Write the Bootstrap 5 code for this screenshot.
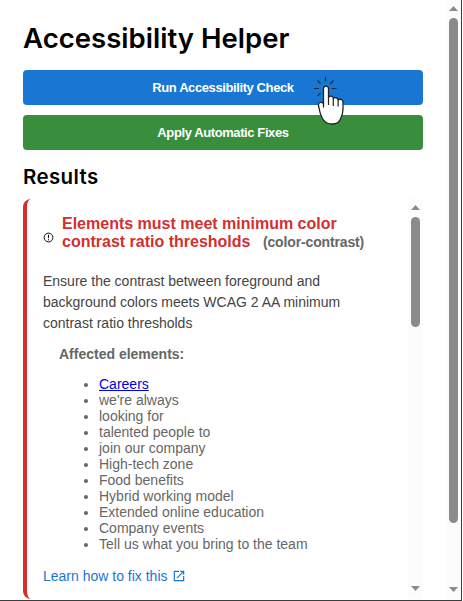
<!DOCTYPE html>
<html lang="en">
<head>
<meta charset="utf-8">
<meta name="viewport" content="width=device-width, initial-scale=1">
<title>Accessibility Helper</title>
<link href="https://cdn.jsdelivr.net/npm/bootstrap@5.3.0/dist/css/bootstrap.min.css" rel="stylesheet">
<style>
body{font-family:"Liberation Sans",Arial,sans-serif;font-size:14px;color:#000;background:#fff}
.window-frame{width:462px;height:601px;border-right:1px solid #3c3c3c;border-bottom:1px solid #3c3c3c}
.panel-main{width:423px;padding:20px 0 0 23px}
.panel-title{font-family:Inter,sans-serif;font-size:27.5px;line-height:36px;font-weight:600;letter-spacing:.04px;margin-bottom:14px;white-space:nowrap}
.btn-action{height:35px;border:0;border-radius:4px;font-size:13px;font-weight:700;line-height:15px;letter-spacing:-.4px;color:#fff;padding:0}
.btn-run{background:#1976d2;margin-bottom:10px}
.btn-fix{background:#388e3c}
.results-title{font-family:Inter,sans-serif;font-size:20.5px;line-height:24px;font-weight:600;letter-spacing:.35px;margin:15px 0 10px}
.issue-card{border-left:4px solid #d32f2f;border-radius:8px 0 0 8px;padding:16px 0 0 16px;width:385px;height:400px}
.issue-title{font-size:16px;line-height:18px;font-weight:700;color:#d32f2f;margin-left:8px}
.rule-name{font-size:14px;line-height:1;letter-spacing:-.14px;color:#666;margin-left:8px}
.issue-text{line-height:21px;color:#444;margin:20px 0 12px;width:320px}
.affected{color:#666;line-height:16px;padding-left:16px}
.affected ul{padding-left:40px;margin:14px 0 14px}
.affected a{color:#0000ee}
.learn-link{color:#1976d2;line-height:16px}
.track-bar{width:15px;background:#fcfcfc}
.thumb-bar{width:9px;border-radius:5px;background:#8b8b8b}
.pointer-hand{position:absolute;left:310px;top:74px}
</style>
</head>
<body class="overflow-hidden">
<div class="window-frame d-flex justify-content-between position-relative">
  <main class="panel-main">
    <h1 class="panel-title">Accessibility Helper</h1>
    <button class="btn btn-action btn-run w-100 d-block">Run Accessibility Check</button>
    <button class="btn btn-action btn-fix w-100 d-block">Apply Automatic Fixes</button>
    <h2 class="results-title">Results</h2>
    <div class="d-flex">
      <section class="issue-card">
        <div class="d-flex align-items-center">
          <svg class="flex-shrink-0 mt-2" width="11" height="11" viewBox="0 0 11 11" fill="none" stroke="#111"><circle cx="5.5" cy="5.5" r="4.4"/><path d="M5.500 2.700v3.500M5.500 7.200v1.100"/></svg>
          <h3 class="issue-title mb-0">Elements must meet minimum color<br>contrast ratio thresholds <span class="rule-name">(color-contrast)</span></h3>
        </div>
        <p class="issue-text">Ensure the contrast between foreground and background colors meets WCAG 2 AA minimum contrast ratio thresholds</p>
        <div class="affected">
          <strong>Affected elements:</strong>
          <ul>
            <li><a href="#">Careers</a></li>
            <li>we're always</li>
            <li>looking for</li>
            <li>talented people to</li>
            <li>join our company</li>
            <li>High-tech zone</li>
            <li>Food benefits</li>
            <li>Hybrid working model</li>
            <li>Extended online education</li>
            <li>Company events</li>
            <li>Tell us what you bring to the team</li>
          </ul>
        </div>
        <a class="learn-link d-inline-flex align-items-center text-decoration-none" href="#">Learn how to fix this
          <svg class="ms-1" width="14" height="14" viewBox="0 0 24 24" fill="#1976d2"><path d="M19 19H5V5h7V3H3v18h18v-9h-2zM14 3v2h3.600L7.800 14.800l1.400 1.400L19 6.400V10h2V3z"/></svg>
        </a>
      </section>
      <div class="track-bar d-flex flex-column align-items-center">
        <svg class="mt-1" width="9" height="14" viewBox="0 0 9 14"><path d="M0 7l4.500-5 4.500 5z" fill="#8b8b8b"/></svg>
        <div class="thumb-bar" style="height:110px"></div>
        <svg class="mt-auto mb-2" width="9" height="5" viewBox="0 0 9 5"><path d="M0 0h9L4.500 5z" fill="#8b8b8b"/></svg>
      </div>
    </div>
  </main>
  <div class="track-bar d-flex flex-column align-items-center">
    <svg width="9" height="18" viewBox="0 0 9 18"><path d="M0 11l4.500-5 4.500 5z" fill="#8b8b8b"/></svg>
    <div class="thumb-bar" style="height:505px"></div>
    <svg class="mt-auto mb-2" width="9" height="5" viewBox="0 0 9 5"><path d="M0 0h9L4.500 5z" fill="#8b8b8b"/></svg>
  </div>
  <svg class="pointer-hand" width="36" height="54" viewBox="0 0 36 54">
    <path d="M15.500 3.500v4M7.500 6.500l3 3M23.500 6.500l-3.500 3.500M4 14.500h5M21.500 14.500h5M10.500 19l-3 3" stroke="#162b40" stroke-width="1.200" fill="none"/>
    <path d="M13.500 33V14.500c0-3.300 5-3.300 5 0v9c1-2.200 4.800-1.600 4.800 1 1-1.500 4.800-1 4.800 1.500 1.400-1.400 4.900-.8 4.900 2V35c0 5-1 7-2.500 10-1.500 3.500-4 5-8 5s-7-1-9-4c-3-3-3.500-7-5-14.500-.7-3 3.500-4.500 5-1.500z" fill="#fff" stroke="#222" stroke-width="1.300" stroke-linejoin="round"/>
    <path d="M18.500 23v8M23.300 24.500v7.500M28.100 26v6.500" stroke="#222" stroke-width="1.200"/>
  </svg>
</div>
<script src="https://cdn.jsdelivr.net/npm/bootstrap@5.3.0/dist/js/bootstrap.bundle.min.js"></script>
</body>
</html>
